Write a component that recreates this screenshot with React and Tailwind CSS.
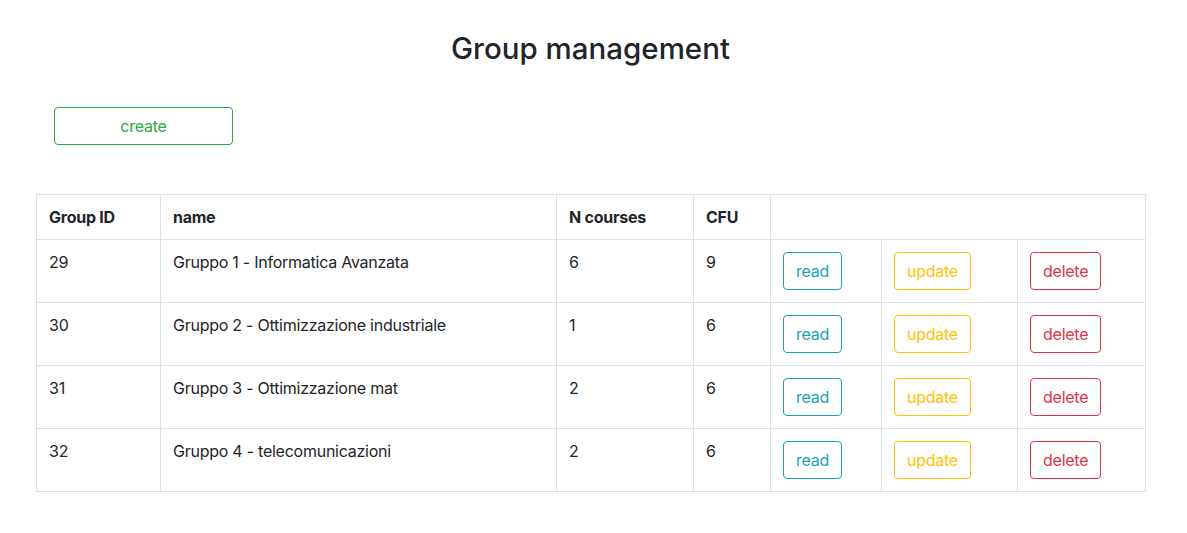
import React from "react";

const rows = [
  { id: 29, name: "Gruppo 1 - Informatica Avanzata", n: 6, cfu: 9 },
  { id: 30, name: "Gruppo 2 - Ottimizzazione industriale", n: 1, cfu: 6 },
  { id: 31, name: "Gruppo 3 - Ottimizzazione mat", n: 2, cfu: 6 },
  { id: 32, name: "Gruppo 4 - telecomunicazioni", n: 2, cfu: 6 },
];

const font = { fontFamily: "Inter, 'Noto Sans', sans-serif" };

export default function App() {
  return (
    <div className="min-h-[533px] bg-white text-[#212529]" style={font}>
      <div className="ml-[36px] w-[1109px] pt-[30px]">
        <h3 className="h-[36px] text-center text-[29.5px] font-medium leading-[36px]">Group management</h3>
        <div className="mt-[41px] pl-[18px]">
          <button className="h-[38px] w-[179px] rounded border border-[#28a745] text-[16px] leading-6 tracking-[-0.25px] text-[#28a745]">
            create
          </button>
        </div>
        <table className="mt-[49px] w-[1109px] table-fixed border-collapse text-[16px] leading-6 tracking-[-0.25px]">
          <colgroup>
            <col className="w-[124px]" />
            <col className="w-[396px]" />
            <col className="w-[137px]" />
            <col className="w-[77px]" />
            <col className="w-[111px]" />
            <col className="w-[136px]" />
            <col className="w-[128px]" />
          </colgroup>
          <thead>
            <tr>
              <th className="border border-[#dee2e6] px-3 pt-[10px] pb-[10px] text-left align-top font-bold">Group ID</th>
              <th className="border border-[#dee2e6] px-3 pt-[10px] pb-[10px] text-left align-top font-bold">name</th>
              <th className="border border-[#dee2e6] px-3 pt-[10px] pb-[10px] text-left align-top font-bold">N courses</th>
              <th className="border border-[#dee2e6] px-3 pt-[10px] pb-[10px] text-left align-top font-bold">CFU</th>
              <th colSpan={3} className="border border-[#dee2e6] px-3 pt-[10px] pb-[10px]"></th>
            </tr>
          </thead>
          <tbody>
            {rows.map((r) => (
              <tr key={r.id}>
                <td className="h-[63px] border border-[#dee2e6] px-3 pt-[10px] align-top">{r.id}</td>
                <td className="border border-[#dee2e6] px-3 pt-[10px] align-top">{r.name}</td>
                <td className="border border-[#dee2e6] px-3 pt-[10px] align-top">{r.n}</td>
                <td className="border border-[#dee2e6] px-3 pt-[10px] align-top">{r.cfu}</td>
                <td className="border border-[#dee2e6] px-3 py-3 align-top">
                  <button className="block h-[38px] rounded border border-[#17a2b8] px-3 text-[#17a2b8]">read</button>
                </td>
                <td className="border border-[#dee2e6] px-3 py-3 align-top">
                  <button className="block h-[38px] rounded border border-[#ffc107] px-3 text-[#ffc107]">update</button>
                </td>
                <td className="border border-[#dee2e6] px-3 py-3 align-top">
                  <button className="block h-[38px] rounded border border-[#dc3545] px-3 text-[#dc3545]">delete</button>
                </td>
              </tr>
            ))}
          </tbody>
        </table>
      </div>
    </div>
  );
}
